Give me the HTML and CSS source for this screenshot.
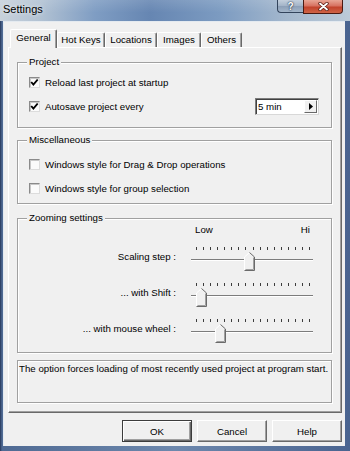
FILE: index.html
```html
<!DOCTYPE html>
<html lang="en">
<head>
    <meta charset="UTF-8">
    <title>Settings</title>
    <link rel="stylesheet" href="styles.css">
</head>
<body>

    <div class="window">
        <div class="titlebar">
            <span class="title">Settings</span>
            <div class="caption-buttons">
                <div class="cap-btn help">?</div>
                <div class="cap-btn close">
                    <svg width="11" height="9" viewBox="0 0 11 9">
                        <path d="M2 1.5 L9 7.5 M9 1.5 L2 7.5" stroke="#5a1c12" stroke-width="3.4" stroke-linecap="round"/>
                        <path d="M2 1.5 L9 7.5 M9 1.5 L2 7.5" stroke="#fff" stroke-width="1.8" stroke-linecap="round"/>
                    </svg>
                </div>
            </div>
        </div>

        <div class="client">
            <div class="tabs">
                <div class="tab active" style="width: 47px">General</div>
                <div class="tab" style="width: 48px">Hot Keys</div>
                <div class="tab" style="width: 52px">Locations</div>
                <div class="tab" style="width: 44px">Images</div>
                <div class="tab" style="width: 41px">Others</div>
            </div>

            <div class="panel">
                <div class="group project">
                    <span class="legend">Project</span>
                    <div class="check-row">
                        <span class="checkbox checked">
                            <svg width="9" height="9" viewBox="0 0 9 9"><path d="M1.2 4 L3.4 6.6 L7.7 1.5" stroke="#000" stroke-width="1.9" fill="none"/></svg>
                        </span>
                        <span>Reload last project at startup</span>
                    </div>
                    <div class="check-row">
                        <span class="checkbox checked">
                            <svg width="9" height="9" viewBox="0 0 9 9"><path d="M1.2 4 L3.4 6.6 L7.7 1.5" stroke="#000" stroke-width="1.9" fill="none"/></svg>
                        </span>
                        <span>Autosave project every</span>
                        <div class="combo">
                            <span class="combo-text">5 min</span>
                            <span class="combo-btn">
                                <svg width="4" height="7" viewBox="0 0 4 7"><path d="M0 0 L4 3.5 L0 7 Z" fill="#000"/></svg>
                            </span>
                        </div>
                    </div>
                </div>

                <div class="group misc">
                    <span class="legend">Miscellaneous</span>
                    <div class="check-row">
                        <span class="checkbox"></span>
                        <span>Windows style for Drag &amp; Drop operations</span>
                    </div>
                    <div class="check-row">
                        <span class="checkbox"></span>
                        <span>Windows style for group selection</span>
                    </div>
                </div>

                <div class="group zooming">
                    <span class="legend">Zooming settings</span>
                    <div class="slider-grid">
                        <span></span>
                        <div class="scale-labels"><span>Low</span><span>Hi</span></div>

                        <span class="slider-label">Scaling step :</span>
                        <div class="slider" data-ticks="17">
                            <div class="ticks"></div>
                            <div class="track"></div>
                            <svg class="thumb" style="left: 53px" width="11" height="19" viewBox="0 0 11 19">
                                <path d="M0.5 18.5 V5 L5.5 0.5 L10.5 5 V18.5 Z" fill="#f0f0f0"/>
                                <path d="M0.5 18 V5 L5.5 0.5" stroke="#fff" fill="none"/>
                                <path d="M5.5 0.5 L10.5 5 V18.5 H0.5" stroke="#6a6a6a" fill="none"/>
                                <path d="M9.5 5.5 V17.5 H1.5" stroke="#a0a0a0" fill="none"/>
                            </svg>
                        </div>

                        <span class="slider-label">... with Shift :</span>
                        <div class="slider" data-ticks="17">
                            <div class="ticks"></div>
                            <div class="track"></div>
                            <svg class="thumb" style="left: 5px" width="11" height="19" viewBox="0 0 11 19">
                                <path d="M0.5 18.5 V5 L5.5 0.5 L10.5 5 V18.5 Z" fill="#f0f0f0"/>
                                <path d="M0.5 18 V5 L5.5 0.5" stroke="#fff" fill="none"/>
                                <path d="M5.5 0.5 L10.5 5 V18.5 H0.5" stroke="#6a6a6a" fill="none"/>
                                <path d="M9.5 5.5 V17.5 H1.5" stroke="#a0a0a0" fill="none"/>
                            </svg>
                        </div>

                        <span class="slider-label">... with mouse wheel :</span>
                        <div class="slider" data-ticks="17">
                            <div class="ticks"></div>
                            <div class="track"></div>
                            <svg class="thumb" style="left: 24px" width="11" height="19" viewBox="0 0 11 19">
                                <path d="M0.5 18.5 V5 L5.5 0.5 L10.5 5 V18.5 Z" fill="#f0f0f0"/>
                                <path d="M0.5 18 V5 L5.5 0.5" stroke="#fff" fill="none"/>
                                <path d="M5.5 0.5 L10.5 5 V18.5 H0.5" stroke="#6a6a6a" fill="none"/>
                                <path d="M9.5 5.5 V17.5 H1.5" stroke="#a0a0a0" fill="none"/>
                            </svg>
                        </div>
                    </div>
                </div>

                <div class="group info">The option forces loading of most recently used project at program start.</div>
            </div>

            <div class="buttons">
                <button class="btn default">OK</button>
                <button class="btn">Cancel</button>
                <button class="btn">Help</button>
            </div>
        </div>
    </div>

    <script>
        // tick marks for the trackbars
        document.querySelectorAll('.slider').forEach(slider => {
            const ticks = slider.querySelector('.ticks');
            const count = parseInt(slider.dataset.ticks, 10);
            for (let i = 0; i < count; i++) {
                const t = document.createElement('span');
                t.className = 'tick';
                ticks.appendChild(t);
            }
        });
    </script>

</body>
</html>
```

FILE: styles.css
```css
* {
    box-sizing: border-box;
}
html, body {
    margin: 0;
    padding: 0;
}
body {
    width: 350px;
    height: 451px;
    overflow: hidden;
    font-family: "Liberation Sans", Arial, sans-serif;
    font-size: 9.7px;
    color: #000;
}
.window {
    width: 350px;
    height: 451px;
    display: flex;
    flex-direction: column;
    background: linear-gradient(90deg, #26375a 0, #4f6a93 2px, #6d88ad 50%, #4a6490 100%);
}
.titlebar {
    height: 21px;
    display: flex;
    background:
        linear-gradient(rgba(255,255,255,0.12), rgba(255,255,255,0) 60%),
        linear-gradient(90deg, #c8d1db 0, #b2c2d3 40px, #7f9dc3 95px, #6686b2 150px, #7c9bc1 220px, #a3b7cd 285px, #bccad8 350px);
}
.title {
    font-size: 11px;
    line-height: 13px;
    padding: 3px 0 0 3px;
    text-shadow: 0 0 4px rgba(255,255,255,0.9);
}
.caption-buttons {
    margin-left: auto;
    margin-right: 7px;
    display: flex;
    height: 14px;
}
.cap-btn {
    display: flex;
    align-items: center;
    justify-content: center;
    border: 1px solid #33445c;
    border-top: none;
}
.help {
    width: 26px;
    height: 13px;
    border-radius: 0 0 0 4px;
    border-right: none;
    background: linear-gradient(#c3cfdc, #a2b3c7 50%, #8c9fb7 51%, #a4b6ca);
    color: #fff;
    font-weight: bold;
    font-size: 10px;
    text-shadow: 0 0 2px #1d2c40, 0 0 1px #1d2c40;
}
.close {
    width: 40px;
    height: 14px;
    border-radius: 0 0 4px 0;
    border-color: #4a1a12;
    background: linear-gradient(#e8a595, #d77261 45%, #c2432c 55%, #cf6447);
}
.client {
    flex: 1;
    margin: 0 5px 5px 3px;
    background: #f0f0f0;
    box-shadow: inset 1px 1px #e4eaf0;
}
.tabs {
    display: flex;
    align-items: flex-end;
    height: 26px;
    padding-left: 7px;
    position: relative;
    z-index: 1;
}
.tab {
    height: 15px;
    line-height: 14px;
    text-align: center;
    white-space: nowrap;
    border: 1px solid;
    border-color: #fff #696969 transparent #fff;
    border-bottom: none;
    box-shadow: inset -1px 0 #a0a0a0;
    border-radius: 2px 2px 0 0;
    background: #f0f0f0;
}
.tab.active {
    height: 19px;
    line-height: 16px;
    margin-bottom: -1px;
}
.panel {
    margin-left: 5px;
    width: 334px;
    height: 366px;
    border: 1px solid;
    border-color: #fff #696969 #696969 #fff;
    box-shadow: inset -1px -1px #a0a0a0;
    padding: 14px 9px 0 8px;
    display: flex;
    flex-direction: column;
}
.group {
    position: relative;
    border: 1px solid #a0a0a0;
    box-shadow: inset 1px 1px #fff, 1px 1px #fff;
}
.legend {
    position: absolute;
    top: -7px;
    left: 9px;
    padding: 0 2px;
    line-height: 12px;
    background: #f0f0f0;
}
.project {
    height: 66px;
    padding: 10px 12px 0 11px;
    display: flex;
    flex-direction: column;
    gap: 6px;
}
.misc {
    margin-top: 12px;
    height: 64px;
    padding: 14px 12px 0 11px;
    display: flex;
    flex-direction: column;
    gap: 6px;
}
.zooming {
    margin-top: 14px;
    height: 135px;
    padding-top: 5px;
}
.info {
    margin-top: 7px;
    height: 43px;
    padding: 1px 1px 0 1px;
    line-height: 13px;
}
.check-row {
    height: 18px;
    display: flex;
    align-items: center;
    gap: 5px;
    white-space: nowrap;
}
.checkbox {
    width: 11px;
    height: 11px;
    flex: none;
    display: flex;
    align-items: center;
    justify-content: center;
    border: 1px solid;
    border-color: #8a8a8a #dcdcdc #dcdcdc #8a8a8a;
    background: #fbfbfb;
    box-shadow: inset 1px 1px #c8c8c8;
}
.combo {
    margin-left: auto;
    width: 64px;
    height: 17px;
    display: flex;
    border: 1px solid;
    border-color: #7c7c7c #d8d8d8 #d8d8d8 #7c7c7c;
    box-shadow: inset 1px 1px #404040;
    background: #fff;
    padding: 1px 1px 1px 1px;
}
.combo-text {
    flex: 1;
    line-height: 13px;
    padding-left: 1px;
}
.combo-btn {
    width: 13px;
    display: flex;
    align-items: center;
    justify-content: center;
    border: 1px solid;
    border-color: #fff #696969 #696969 #fff;
    background: #f0f0f0;
}
.slider-grid {
    display: grid;
    grid-template-columns: 158px 122px;
    grid-auto-rows: 26px;
    grid-template-rows: 12px;
    column-gap: 15px;
    row-gap: 10px;
}
.scale-labels {
    display: flex;
    justify-content: space-between;
    padding: 0 3px 0 4px;
    line-height: 12px;
}
.slider-label {
    text-align: right;
    line-height: 22px;
    white-space: nowrap;
}
.slider {
    position: relative;
}
.ticks {
    display: flex;
    justify-content: space-between;
    margin-top: 1px;
    padding: 0 3px 0 5px;
    height: 3px;
}
.tick {
    width: 1px;
    height: 3px;
    background: #3c3c3c;
}
.track {
    position: absolute;
    top: 13px;
    left: 0;
    right: 0;
    height: 2px;
    border-top: 1px solid #7c7c7c;
    border-bottom: 1px solid #fff;
}
.thumb {
    position: absolute;
    top: 6px;
}
.buttons {
    display: flex;
    justify-content: flex-end;
    gap: 5px;
    margin-top: 7px;
    padding-right: 3px;
}
.btn {
    width: 70px;
    height: 22px;
    padding: 0;
    font-family: inherit;
    font-size: inherit;
    color: #000;
    background: #f0f0f0;
    border: 1px solid;
    border-color: #fff #696969 #696969 #fff;
    box-shadow: inset -1px -1px #a0a0a0;
}
.btn.default {
    border: 1px solid #3c3c3c;
    box-shadow: inset 1px 1px #fff, inset -1px -1px #696969, inset -2px -2px #a0a0a0;
}
```
